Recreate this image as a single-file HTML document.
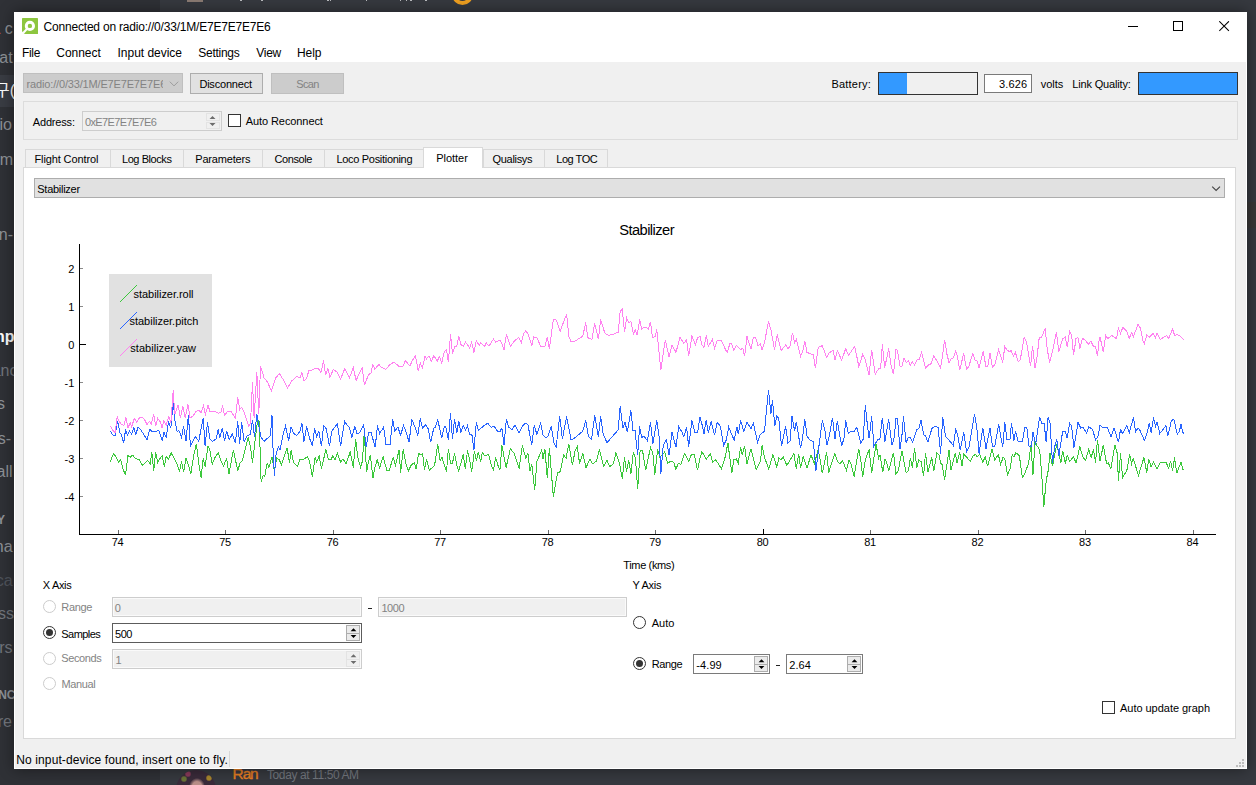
<!DOCTYPE html>
<html lang="en"><head><meta charset="utf-8"><title>Connected on radio://0/33/1M/E7E7E7E7E6</title>
<style>
html,body{margin:0;padding:0}
body{width:1256px;height:785px;overflow:hidden;position:relative;background:#36393f;font-family:"Liberation Sans", sans-serif;}
#desk,#win{position:absolute;left:0;top:0;width:1256px;height:785px;overflow:hidden}
#desk>div,#win>div,#win>svg,.clip>div{position:absolute}
#win div div{position:absolute}
.t{line-height:1;white-space:nowrap;font-family:"Liberation Sans", sans-serif}
.clip{overflow:hidden}
.sd{right:1242px;font:16px/20px "Liberation Sans", sans-serif;white-space:nowrap}
.dz{line-height:1;white-space:nowrap}
.radio{width:13px;height:13px;box-sizing:border-box;border:1px solid #333;border-radius:50%;background:#fff}
.radio i{position:absolute;left:2px;top:2px;width:7px;height:7px;border-radius:50%;background:#333}
</style></head>
<body>
<div id="desk">
<div style="left:0px;top:0px;width:160px;height:785px;background:#2f3136"></div>
<div style="left:160px;top:0px;width:1096px;height:785px;background:#36393f"></div>
<div style="left:0px;top:75px;width:14px;height:32px;background:#393c43"></div>
<div style="left:1247px;top:202px;width:9px;height:26px;background:#393838"></div>
<div class="sd" style="top:19px;right:1243.2px;color:#8e9297;font-weight:400"><span style="color:#b5524f">L</span> c</div>
<div class="sd" style="top:48px;right:1243.4px;color:#8e9297;font-weight:400">at</div>
<div class="sd" style="top:115px;right:1244px;color:#8e9297;font-weight:400">io</div>
<div class="sd" style="top:150px;right:1243px;color:#8e9297;font-weight:400">-m</div>
<div class="sd" style="top:225px;right:1243px;color:#8e9297;font-weight:400">n-</div>
<div class="sd" style="top:327px;right:1241.5px;color:#ffffff;font-weight:700">np</div>
<div class="sd" style="top:361px;right:1238.5px;color:#72767d;font-weight:400">anc</div>
<div class="sd" style="top:394px;right:1251px;color:#8e9297;font-weight:400">s</div>
<div class="sd" style="top:429px;right:1245px;color:#8e9297;font-weight:400">s-</div>
<div class="sd" style="top:462px;right:1243.4px;color:#8e9297;font-weight:400">all</div>
<div class="sd" style="top:537px;right:1243.4px;color:#8e9297;font-weight:400">na</div>
<div class="sd" style="top:571px;right:1243.4px;color:#4f545c;font-weight:400">ca</div>
<div class="sd" style="top:604px;right:1242px;color:#72767d;font-weight:400">ss</div>
<div class="sd" style="top:638px;right:1243.4px;color:#72767d;font-weight:400">rs</div>
<div class="sd" style="top:712px;right:1244px;color:#72767d;font-weight:400">re</div>
<div class="sd" style="top:510px;right:1251px;color:#8e9297;font-size:12px;font-weight:700">Y</div>
<div class="sd" style="top:685px;right:1240.5px;color:#8e9297;font-size:12px;font-weight:700">INC</div>
<div class="sd" style="top:81px;right:1241px;color:#fff;font:16px/20px 'Liberation Sans','Noto Sans CJK KR',sans-serif">&#xAD6C;(</div>
<div class="t " style="top:766.18px;font-size:15.5px;color:#e67e22;letter-spacing:-1.146px;left:232.60px;-webkit-text-stroke:0.35px #e67e22;"><span>Ran</span></div>
<div class="t " style="top:769.14px;font-size:12px;color:#72767d;letter-spacing:-0.401px;left:267.00px;"><span>Today at 11:50 AM</span></div>
<div style="left:176px;top:769.5px;width:40px;height:40px;border-radius:50%;background:radial-gradient(ellipse 8px 9px at 21px 17px,#b98f88 0 60%,transparent 100%),radial-gradient(circle at 8px 9px,#6a7436 0 2px,transparent 3.5px),radial-gradient(circle at 33px 8px,#a8862c 0 2px,transparent 3.5px),radial-gradient(circle at 12px 4px,#8a3a5a 0 2px,transparent 3.5px),#3a2b3a"></div>
<div style="left:451.5px;top:-16px;width:21px;height:21px;border-radius:50%;border:4px solid #f0a020;box-sizing:border-box"></div>
<div style="left:187px;top:0px;width:16px;height:2px;background:#8a7a72"></div>
<div style="left:240px;top:0px;width:1.5px;height:1.4px;background:#b9bbbe"></div>
<div style="left:261px;top:0px;width:1.5px;height:1.4px;background:#b9bbbe"></div>
<div style="left:327px;top:0px;width:1.5px;height:1.4px;background:#b9bbbe"></div>
<div style="left:329.5px;top:0px;width:1.5px;height:1.4px;background:#b9bbbe"></div>
<div style="left:365.5px;top:0px;width:1.5px;height:1.4px;background:#b9bbbe"></div>
<div style="left:399.5px;top:0px;width:1.5px;height:1.4px;background:#b9bbbe"></div>
<div style="left:405.5px;top:0px;width:1.5px;height:1.4px;background:#b9bbbe"></div>
<div style="left:410px;top:0px;width:1.5px;height:1.4px;background:#b9bbbe"></div>
<div style="left:425px;top:0px;width:1.5px;height:1.4px;background:#b9bbbe"></div>
</div>
<div id="win">
<div style="left:14px;top:12px;width:1233px;height:757px;background:#fff;box-shadow:0 0 14px rgba(0,0,0,.45)"></div>
<div style="left:15px;top:62px;width:1231px;height:706px;background:#f0f0f0"></div>
<svg style="left:22px;top:18px" width="16" height="16" viewBox="0 0 16 16"><rect width="16" height="16" rx=".6" fill="#8dc63f"/><path d="M1.2 15 L5.2 10.6" stroke="#fff" stroke-width="2.1" stroke-linecap="butt" fill="none"/><circle cx="7.9" cy="7.9" r="3.65" fill="none" stroke="#fff" stroke-width="2.9"/><path d="M0 13.2 L0 16 L2.6 16 Z" fill="#fff"/></svg>
<div class="t " style="top:21.24px;font-size:12px;color:#000;letter-spacing:-0.201px;left:43.60px;"><span>Connected on radio://0/33/1M/E7E7E7E7E6</span></div>
<div style="left:1128px;top:26px;width:10px;height:1px;background:#000"></div>
<div style="left:1173px;top:21px;width:10px;height:10px;border:1px solid #000;box-sizing:border-box"></div>
<svg style="left:1219px;top:21px" width="11" height="11" viewBox="0 0 11 11"><path d="M0.3 0.3 L9.9 9.9 M9.9 0.3 L0.3 9.9" stroke="#000" stroke-width="1.05" fill="none"/></svg>
<div class="t " style="top:46.84px;font-size:12px;color:#000;letter-spacing:-0.336px;left:22.00px;"><span>File</span></div>
<div class="t " style="top:46.84px;font-size:12px;color:#000;letter-spacing:-0.029px;left:56.30px;"><span>Connect</span></div>
<div class="t " style="top:46.84px;font-size:12px;color:#000;letter-spacing:-0.018px;left:117.50px;"><span>Input device</span></div>
<div class="t " style="top:46.84px;font-size:12px;color:#000;letter-spacing:-0.270px;left:198.30px;"><span>Settings</span></div>
<div class="t " style="top:46.84px;font-size:12px;color:#000;letter-spacing:-0.274px;left:256.30px;"><span>View</span></div>
<div class="t " style="top:46.84px;font-size:12px;color:#000;letter-spacing:-0.047px;left:297.00px;"><span>Help</span></div>
<div style="left:23px;top:73px;width:160px;height:20px;background:#ccc;border:1px solid #bfbfbf;box-sizing:border-box"></div>
<div class="clip" style="left:25px;top:74px;width:138px;height:18px">
<div class="t " style="top:5.29px;font-size:11px;color:#838383;letter-spacing:-0.162px;left:1.60px;"><span>radio://0/33/1M/E7E7E7E7E6</span></div>
</div>
<svg style="left:169px;top:81px" width="10" height="6" viewBox="0 0 10 6"><path d="M0.8 0.7 L5 4.9 L9.2 0.7" stroke="#9b9b9b" stroke-width="1" fill="none"/></svg>
<div style="left:190px;top:73px;width:73px;height:21px;background:#e1e1e1;border:1px solid #adadad;box-sizing:border-box"></div>
<div class="t " style="top:78.69px;font-size:11px;color:#000;letter-spacing:-0.202px;left:199.40px;"><span>Disconnect</span></div>
<div style="left:271px;top:73px;width:73px;height:21px;background:#ccc;border:1px solid #bfbfbf;box-sizing:border-box"></div>
<div class="t " style="top:78.69px;font-size:11px;color:#838383;letter-spacing:-0.695px;left:157.50px;width:300px;text-align:center;"><span>Scan</span></div>
<div class="t " style="top:78.69px;font-size:11px;color:#000;letter-spacing:0.199px;left:831.50px;"><span>Battery:</span></div>
<div style="left:878px;top:72px;width:100px;height:23px;background:#f0f0f0;border:1px solid #333;box-sizing:border-box"><div style="left:0px;top:0px;width:28px;height:21px;background:#3399ff"></div></div>
<div style="left:984px;top:74px;width:48px;height:19px;background:#fff;border:1px solid #7a7a7a;box-sizing:border-box"></div>
<div class="t " style="top:78.69px;font-size:11px;color:#000;letter-spacing:0.174px;left:727.40px;width:300px;text-align:right;"><span>3.626</span></div>
<div class="t " style="top:78.69px;font-size:11px;color:#000;letter-spacing:-0.005px;left:1040.70px;"><span>volts</span></div>
<div class="t " style="top:78.69px;font-size:11px;color:#000;letter-spacing:-0.164px;left:1072.30px;"><span>Link Quality:</span></div>
<div style="left:1138px;top:72px;width:100px;height:23px;background:#3399ff;border:1px solid #333;box-sizing:border-box"></div>
<div style="left:23px;top:101px;width:1215px;height:39px;border:1px solid #dcdcdc;box-sizing:border-box"></div>
<div class="t " style="top:116.69px;font-size:11px;color:#000;letter-spacing:-0.178px;left:32.80px;"><span>Address:</span></div>
<div style="left:82px;top:111px;width:140px;height:20px;background:#f0f0f0;border:1px solid #cdcdcd;box-sizing:border-box"></div>
<div class="t " style="top:116.69px;font-size:11px;color:#838383;letter-spacing:-0.624px;left:84.90px;"><span>0xE7E7E7E7E6</span></div>
<div style="left:206px;top:113px;width:14px;height:8px;border:1px solid #e3e3e3;box-sizing:border-box"></div>
<div style="left:206px;top:122px;width:14px;height:7px;border:1px solid #e3e3e3;box-sizing:border-box"></div>
<svg style="left:209px;top:116px" width="7" height="10" viewBox="0 0 7 10"><path d="M0.5 3 L3.5 0 L6.5 3 Z M0.5 7 L3.5 10 L6.5 7 Z" fill="#6d6d6d"/></svg>
<div style="left:228px;top:114px;width:13px;height:13px;background:#fff;border:1px solid #333;box-sizing:border-box"></div>
<div class="t " style="top:115.69px;font-size:11px;color:#000;letter-spacing:-0.092px;left:245.80px;"><span>Auto Reconnect</span></div>
<div style="left:23px;top:167px;width:1213px;height:572px;background:#fff;border:1px solid #d9d9d9;box-sizing:border-box"></div>
<div style="left:25px;top:149px;width:86px;height:19px;background:#f0f0f0;border:1px solid #d9d9d9;box-sizing:border-box"></div>
<div class="t " style="top:153.69px;font-size:11px;color:#000;letter-spacing:-0.119px;left:34.50px;"><span>Flight Control</span></div>
<div style="left:110px;top:149px;width:74px;height:19px;background:#f0f0f0;border:1px solid #d9d9d9;box-sizing:border-box"></div>
<div class="t " style="top:153.69px;font-size:11px;color:#000;letter-spacing:-0.431px;left:122.00px;"><span>Log Blocks</span></div>
<div style="left:183px;top:149px;width:80px;height:19px;background:#f0f0f0;border:1px solid #d9d9d9;box-sizing:border-box"></div>
<div class="t " style="top:153.69px;font-size:11px;color:#000;letter-spacing:-0.186px;left:195.25px;"><span>Parameters</span></div>
<div style="left:262px;top:149px;width:63px;height:19px;background:#f0f0f0;border:1px solid #d9d9d9;box-sizing:border-box"></div>
<div class="t " style="top:153.69px;font-size:11px;color:#000;letter-spacing:-0.408px;left:274.50px;"><span>Console</span></div>
<div style="left:324px;top:149px;width:100px;height:19px;background:#f0f0f0;border:1px solid #d9d9d9;box-sizing:border-box"></div>
<div class="t " style="top:153.69px;font-size:11px;color:#000;letter-spacing:-0.312px;left:336.50px;"><span>Loco Positioning</span></div>
<div style="left:483px;top:149px;width:62px;height:19px;background:#f0f0f0;border:1px solid #d9d9d9;box-sizing:border-box"></div>
<div class="t " style="top:153.69px;font-size:11px;color:#000;letter-spacing:-0.305px;left:492.50px;"><span>Qualisys</span></div>
<div style="left:544px;top:149px;width:64px;height:19px;background:#f0f0f0;border:1px solid #d9d9d9;box-sizing:border-box"></div>
<div class="t " style="top:153.69px;font-size:11px;color:#000;letter-spacing:-0.462px;left:556.25px;"><span>Log TOC</span></div>
<div style="left:423px;top:147px;width:60px;height:21px;background:#fff;border:1px solid #d9d9d9;border-bottom:none;box-sizing:border-box"></div>
<div class="t " style="top:152.89px;font-size:11px;color:#000;letter-spacing:-0.042px;left:436.25px;"><span>Plotter</span></div>
<div style="left:34px;top:178px;width:1191px;height:20px;background:#e1e1e1;border:1px solid #adadad;box-sizing:border-box"></div>
<div class="t " style="top:183.69px;font-size:11px;color:#000;letter-spacing:-0.275px;left:37.30px;"><span>Stabilizer</span></div>
<svg style="left:1211px;top:185px" width="11" height="7" viewBox="0 0 11 7"><path d="M1.2 1.6 L5.1 5.5 L9 1.6" stroke="#444" stroke-width="1.15" fill="none"/></svg>
<div class="t " style="top:222.56px;font-size:14.7px;color:#000;letter-spacing:-0.562px;left:496.60px;width:300px;text-align:center;"><span>Stabilizer</span></div>
<svg id="plot" style="left:0;top:200px" width="1256" height="360" viewBox="0 200 1256 360" shape-rendering="crispEdges"><rect x="109" y="274" width="103" height="93" fill="#e1e1e1"/><polyline points="110.4,461.5 113.5,453.6 115.9,456.4 118.3,462.0 120.7,459.6 123.1,469.2 125.5,475.2 127.9,455.6 130.3,457.2 132.6,455.2 135.8,458.8 139.0,459.6 142.2,465.2 145.4,462.8 147.8,460.4 150.2,463.6 151.8,452.5 153.7,470.8 155.7,451.7 157.6,462.8 159.7,458.8 162.1,455.6 164.5,466.8 166.1,456.4 168.5,458.8 171.2,452.9 174.0,458.0 177.2,464.4 179.6,471.1 181.5,461.2 183.6,472.4 186.0,458.0 188.4,465.2 190.8,473.9 193.9,454.8 196.3,443.7 198.7,462.8 201.1,477.9 203.2,458.0 205.1,466.8 208.0,445.6 209.9,450.1 212.3,464.4 214.6,458.0 218.2,452.9 221.0,461.2 223.4,466.0 226.6,458.8 229.0,473.9 233.4,449.7 237.7,470.8 240.1,462.8 242.5,460.4 248.1,437.3 250.5,446.9 252.5,462.8 255.3,438.9 257.6,419.8 259.2,421.4 261.1,481.9 263.2,475.5 264.8,476.3 267.2,462.8 268.8,467.6 272.0,457.2 274.4,470.8 276.8,458.0 279.1,459.6 281.5,464.4 287.1,447.7 289.5,462.8 291.1,450.1 293.5,462.8 297.5,466.0 300.0,459.6 303.2,459.8 307.2,456.7 309.6,461.4 312.4,476.6 315.1,457.5 316.7,462.2 319.1,455.9 321.5,468.6 325.8,449.5 328.3,459.0 331.1,459.8 332.6,455.9 335.0,459.8 337.4,453.5 340.6,462.2 343.0,459.0 346.2,463.8 350.2,451.9 353.3,467.8 355.7,439.1 357.6,456.7 360.5,467.0 362.4,461.4 364.2,432.8 366.6,471.8 368.5,461.4 370.4,455.1 372.9,478.2 374.8,467.8 377.2,459.8 379.6,467.8 383.1,456.7 386.8,470.2 389.2,470.2 393.2,457.5 395.5,465.4 399.0,450.3 400.6,472.6 403.2,449.5 405.9,463.8 408.3,471.0 411.5,464.6 414.3,463.0 416.2,469.4 418.6,453.5 421.0,455.1 422.6,453.5 424.5,470.2 426.6,459.0 429.3,470.2 434.6,465.4 437.7,443.9 440.1,460.6 442.0,457.5 446.5,471.8 448.4,448.7 450.5,463.0 452.5,463.0 454.5,453.5 456.8,465.4 458.8,471.0 463.2,454.3 465.3,469.4 467.5,450.3 469.6,459.8 471.7,471.8 474.4,451.1 476.4,461.4 478.3,451.9 480.7,462.2 482.3,452.7 484.7,455.9 488.7,454.3 491.1,464.6 493.5,470.2 495.5,457.5 498.2,466.2 500.0,469.4 501.9,445.5 506.1,467.5 510.4,448.7 514.3,453.5 519.1,468.6 522.3,445.5 525.8,458.2 527.9,452.7 529.9,471.0 531.8,464.6 534.7,489.8 536.9,461.4 541.7,450.3 543.0,459.0 544.9,448.7 547.3,478.2 549.4,447.9 553.3,496.5 557.6,472.6 560.2,471.8 563.7,455.1 566.1,458.2 568.8,443.6 572.5,465.4 574.8,451.9 577.2,446.3 579.6,463.8 582.8,453.5 586.0,467.8 590.0,459.0 592.4,463.8 596.3,461.4 599.5,449.5 603.5,466.2 607.0,460.6 609.9,466.5 613.4,463.8 615.9,452.7 619.4,463.0 622.3,478.6 624.5,457.5 626.6,471.8 628.7,459.8 630.9,474.2 633.4,451.9 635.4,458.2 637.7,488.5 640.1,451.1 642.5,450.3 645.7,470.2 650.5,447.4 652.9,453.5 654.8,474.5 657.6,449.5 660.0,457.5 664.8,451.9 667.5,463.0 671.2,461.1 673.6,462.2 676.0,469.4 678.3,463.0 680.7,464.6 684.7,453.5 688.7,461.4 691.1,455.1 694.3,454.3 697.5,470.2 700.0,458.2 701.9,451.9 706.4,459.0 710.4,453.8 712.7,462.2 715.9,459.8 721.5,469.1 725.5,455.9 727.9,442.6 731.8,473.4 733.8,459.5 736.3,459.0 738.2,463.3 740.6,447.4 742.2,455.1 744.6,446.3 747.0,463.8 751.0,448.7 756.1,469.4 760.5,461.4 762.1,445.5 764.5,457.5 768.8,469.1 772.9,454.7 776.8,467.0 778.8,458.2 781.2,459.8 783.1,456.7 786.8,465.4 793.9,453.8 796.3,468.6 798.7,454.3 800.6,467.8 803.2,456.7 807.0,467.8 811.1,455.1 814.3,463.8 818.2,449.5 820.2,459.8 822.3,473.4 826.6,451.9 828.7,472.6 832.2,461.4 835.0,453.5 837.3,461.4 840.1,463.8 842.5,460.6 846.5,470.2 848.9,460.6 850.5,462.2 854.1,476.6 858.8,448.7 860.8,460.6 862.7,476.6 865.3,459.8 869.1,449.5 871.7,472.9 876.0,444.2 878.7,458.2 879.9,454.7 882.8,472.3 885.0,459.0 886.6,462.2 888.7,470.7 893.5,452.7 895.9,474.2 898.2,471.0 900.0,461.4 901.9,450.6 906.1,472.6 908.3,471.0 910.4,458.2 912.4,467.8 914.6,447.9 916.7,467.8 918.8,460.2 921.0,461.4 923.6,475.8 925.5,452.7 927.9,472.3 931.8,457.5 933.8,471.0 936.9,452.7 939.0,455.1 940.6,463.0 942.2,464.6 944.6,479.7 949.0,450.3 951.0,470.2 955.4,452.7 957.0,463.0 959.7,451.9 962.1,466.2 963.7,454.3 966.9,457.5 970.4,461.4 973.2,455.9 975.6,454.3 977.2,456.7 979.6,454.3 982.8,462.2 985.2,456.7 987.6,466.2 992.0,449.5 994.7,459.8 998.4,454.7 1000.6,464.6 1003.2,457.0 1004.8,459.0 1007.5,474.5 1009.9,469.4 1012.3,454.7 1013.9,457.0 1015.9,452.7 1019.4,455.9 1022.3,477.4 1024.5,474.2 1028.7,463.0 1030.9,444.7 1033.0,474.5 1035.0,441.5 1037.3,446.3 1039.6,449.5 1041.7,474.2 1043.8,506.8 1046.2,480.5 1048.1,471.0 1050.0,453.5 1052.5,466.2 1056.8,443.9 1060.8,463.0 1062.7,450.6 1065.3,463.8 1067.2,455.1 1069.6,461.4 1073.6,456.7 1076.0,463.0 1079.9,446.8 1082.8,456.7 1085.5,460.6 1088.7,449.5 1091.1,457.5 1093.5,449.5 1095.5,462.7 1097.5,439.9 1100.0,461.4 1103.3,445.2 1106.6,463.8 1108.2,462.7 1110.9,468.6 1114.9,444.7 1117.3,453.5 1118.4,481.3 1120.5,453.5 1122.6,477.4 1126.9,470.2 1129.6,454.3 1131.6,463.8 1133.2,458.6 1138.5,475.4 1143.9,457.5 1146.8,472.6 1148.7,459.0 1151.1,467.0 1153.5,462.2 1157.1,468.6 1160.3,462.7 1165.9,462.2 1168.7,468.1 1170.6,461.1 1172.6,471.0 1174.6,457.5 1176.7,473.4 1181.0,462.2 1182.9,469.4 1183.9,469.1" fill="none" stroke="#3cc83c" stroke-width="1"/><polyline points="110.4,431.0 112.7,434.9 115.1,435.7 117.5,420.6 119.9,432.5 121.5,434.9 123.6,443.4 125.5,430.2 127.4,434.9 129.5,431.0 131.8,434.1 133.8,427.8 135.8,434.1 138.2,427.0 140.6,429.4 143.0,433.3 147.0,439.7 149.7,429.4 152.5,431.8 155.7,431.8 158.9,430.2 162.1,440.5 164.0,432.5 166.1,437.3 168.5,422.2 170.9,427.8 173.2,400.7 174.8,419.8 177.2,431.8 178.8,430.2 181.5,437.3 183.6,426.2 186.0,441.3 188.4,415.0 190.4,446.1 195.5,436.5 198.7,441.3 203.2,418.2 205.1,446.1 207.5,422.2 209.9,438.9 212.3,441.3 216.2,438.9 218.2,429.4 219.7,438.1 222.3,427.8 224.5,441.3 226.6,431.0 229.3,439.7 232.2,434.1 235.4,442.9 237.7,421.4 239.6,443.7 241.7,422.2 244.1,441.3 247.3,435.7 250.5,434.1 252.5,419.8 254.5,437.3 256.8,414.2 259.2,427.8 261.1,437.3 264.0,441.3 270.4,435.7 272.0,415.0 272.8,443.7 274.4,476.3 276.0,454.8 278.3,446.9 279.9,450.1 283.1,434.1 285.5,426.2 288.7,440.5 291.1,427.0 293.5,433.3 296.7,435.7 300.0,431.0 301.9,423.2 304.0,441.5 306.7,426.4 309.6,438.3 312.4,446.3 314.6,428.0 316.7,436.8 318.8,431.2 321.5,446.3 323.6,425.6 326.3,428.8 329.5,446.3 331.8,431.2 334.7,427.2 337.4,424.0 340.6,446.3 344.6,421.3 347.0,424.8 349.4,427.2 351.8,437.5 354.9,426.4 357.0,433.6 359.7,432.8 363.7,424.8 366.1,447.1 368.5,432.8 370.9,432.0 375.2,447.1 377.5,425.6 379.6,433.6 383.6,427.2 386.0,444.7 390.0,444.7 392.7,419.2 394.7,431.2 397.9,427.2 400.6,435.2 403.5,425.6 405.9,431.2 409.1,442.3 411.8,419.2 415.4,428.0 417.8,436.0 420.2,418.4 422.6,428.0 425.8,424.8 428.2,428.8 430.6,442.3 433.8,428.0 435.4,427.2 437.7,419.2 441.7,438.3 444.1,427.2 445.7,426.4 448.4,439.9 450.5,413.3 452.5,439.1 454.5,419.2 456.8,432.8 458.8,420.8 460.8,432.8 463.2,425.6 465.6,430.4 467.5,425.6 469.6,434.4 472.0,435.2 473.9,450.3 476.3,422.4 478.3,430.4 483.1,426.4 487.6,423.2 491.1,427.2 494.3,426.4 497.5,431.2 500.0,431.5 501.9,428.0 504.0,444.7 506.4,419.2 508.8,427.2 511.9,429.6 515.1,425.1 519.1,432.8 522.3,426.4 525.5,423.2 527.9,424.8 531.8,444.7 534.2,425.6 536.9,434.4 540.6,423.2 543.0,435.2 545.4,437.5 547.8,436.8 551.3,426.4 553.8,442.3 556.1,447.4 559.7,416.5 562.4,439.1 566.6,416.5 570.9,439.1 573.2,439.1 578.0,435.2 582.8,431.2 585.7,420.4 588.4,436.8 591.6,439.1 594.7,415.3 598.4,436.8 600.6,416.5 603.2,434.4 607.0,442.6 618.2,429.9 620.2,406.2 622.9,428.0 625.0,422.4 627.4,432.0 630.9,410.5 633.0,430.4 635.0,430.4 637.7,455.1 639.6,426.4 641.7,437.5 644.1,436.0 647.3,440.7 650.5,422.4 652.9,443.9 656.8,420.4 659.2,437.5 660.8,474.2 663.2,445.5 666.4,439.9 669.1,455.1 672.0,432.5 676.0,447.1 678.7,426.7 681.5,431.2 683.9,436.8 686.6,426.7 688.7,447.1 691.9,420.4 695.1,432.8 697.5,432.8 700.0,416.8 701.9,424.0 704.0,433.6 706.1,420.0 708.3,432.8 711.1,421.6 714.6,435.2 717.2,422.4 720.4,426.4 723.6,445.5 726.3,439.9 728.7,427.2 731.1,432.8 734.2,440.4 736.9,426.7 738.2,434.4 740.6,420.4 743.8,431.5 747.0,422.4 751.0,428.8 753.3,423.2 757.6,442.3 760.2,434.4 764.5,431.2 766.6,408.9 768.5,390.1 770.9,413.7 772.5,400.4 774.8,425.6 776.8,416.1 778.8,418.4 781.5,446.3 783.6,436.0 785.7,426.4 787.9,443.1 790.0,441.5 792.0,416.5 794.7,431.2 796.3,421.6 800.6,448.4 802.7,436.8 804.8,419.2 807.0,436.0 810.2,440.4 813.4,441.5 815.9,470.7 818.6,448.7 822.3,420.4 825.0,431.2 826.9,445.2 829.0,437.5 832.5,417.6 835.0,439.1 837.3,420.8 841.7,446.3 844.1,437.5 845.7,420.4 848.4,433.6 850.5,431.2 854.1,431.5 856.8,427.2 860.8,443.1 863.2,439.1 865.3,405.4 867.2,423.2 869.1,438.3 871.7,416.5 873.9,446.3 877.5,439.9 879.9,439.1 882.3,417.6 885.0,441.5 888.7,419.2 891.9,445.2 894.3,437.5 895.9,418.8 897.5,418.8 900.0,448.7 901.9,436.0 903.5,416.5 906.1,442.6 908.3,437.5 910.4,437.5 912.7,442.3 916.7,429.6 918.8,428.8 921.0,420.4 923.6,434.7 925.5,436.0 927.9,442.0 931.8,428.8 934.7,426.1 938.2,427.7 940.6,453.5 942.7,417.2 945.4,436.0 949.4,440.7 953.3,445.5 955.7,429.6 957.6,434.4 960.2,450.3 963.7,432.0 966.6,451.9 968.8,447.9 974.5,414.0 976.8,427.2 979.1,453.8 982.8,427.7 986.0,448.7 990.0,427.7 992.4,446.3 994.7,446.3 998.7,424.5 1002.7,447.4 1004.8,422.4 1007.0,439.9 1009.9,439.9 1011.5,423.2 1013.9,440.7 1015.4,431.2 1018.2,442.0 1022.3,441.5 1025.0,427.2 1026.9,428.0 1029.0,446.3 1031.4,446.3 1033.0,432.5 1035.7,444.7 1039.6,417.2 1041.7,423.2 1044.1,423.2 1046.2,442.3 1048.1,417.2 1050.0,423.2 1052.5,463.0 1054.8,446.3 1056.8,439.1 1058.8,455.9 1062.7,431.2 1065.3,431.2 1067.2,438.3 1069.6,423.2 1071.7,426.4 1073.9,447.9 1078.0,422.4 1080.7,428.0 1083.1,427.7 1086.6,432.8 1088.7,426.7 1092.7,429.6 1095.5,439.9 1098.2,436.0 1100.0,424.8 1103.0,428.0 1107.3,427.2 1110.9,436.8 1114.1,428.0 1118.4,442.3 1120.5,429.6 1122.6,433.6 1126.9,425.6 1129.2,432.8 1133.5,417.6 1135.6,432.0 1138.0,427.7 1140.4,431.2 1144.4,440.4 1146.8,434.4 1149.2,423.2 1151.1,432.8 1153.5,417.6 1155.5,426.4 1157.1,422.4 1159.8,433.6 1165.9,425.6 1167.8,436.0 1171.4,420.8 1173.8,419.2 1177.3,434.0 1179.4,431.2 1181.0,424.0 1182.9,432.8 1183.9,433.1" fill="none" stroke="#2864ff" stroke-width="1"/><polyline points="110.4,426.2 112.7,430.2 115.1,432.5 117.2,416.6 119.1,421.4 121.5,424.6 123.9,425.4 125.8,417.4 127.9,427.8 130.3,423.0 131.8,427.0 134.2,418.2 136.6,422.2 139.8,417.4 142.2,417.4 144.6,419.8 147.0,424.6 149.4,421.4 151.3,423.8 153.7,414.2 155.7,426.2 157.6,418.2 160.5,422.2 162.1,427.8 164.0,420.6 166.1,425.4 168.8,416.6 170.9,423.0 173.2,390.4 174.8,414.2 178.0,404.7 180.4,418.2 182.8,406.3 185.2,418.2 187.9,403.9 190.0,418.2 193.2,415.8 195.5,411.8 198.7,410.3 201.1,412.6 203.5,405.5 205.4,414.2 208.0,405.5 209.9,411.1 214.6,411.1 218.6,413.4 221.0,411.8 222.6,405.5 224.5,415.0 227.4,411.8 231.4,411.8 235.4,418.2 237.7,397.5 239.8,409.5 241.7,407.1 244.1,411.8 246.5,419.8 248.9,426.2 250.5,423.0 252.5,382.4 254.1,418.2 256.8,372.0 258.8,414.2 260.5,366.0 264.1,377.9 267.6,382.3 271.4,391.1 275.8,377.9 279.3,373.5 283.1,379.4 287.5,388.2 291.9,380.8 296.9,376.4 300.0,378.0 301.9,372.5 304.0,381.2 306.4,378.8 308.8,370.9 311.9,370.1 315.1,368.5 318.3,368.5 321.0,372.5 323.6,360.5 325.5,374.8 327.9,368.5 329.9,377.2 333.4,369.3 337.4,372.5 340.6,378.8 344.9,368.5 349.4,378.0 353.3,367.7 356.1,380.4 362.1,367.7 364.5,385.2 368.5,374.5 370.9,373.2 372.9,364.5 374.8,369.3 378.8,364.5 382.0,367.7 386.0,369.3 390.0,364.5 393.9,362.1 398.7,366.1 402.7,366.9 405.4,360.5 409.9,366.1 412.3,360.5 415.4,355.7 418.2,370.9 420.2,362.9 422.3,367.7 425.0,356.5 426.6,358.9 429.0,355.7 431.4,361.3 433.8,355.7 437.3,361.3 439.3,356.5 441.7,362.9 444.1,352.5 446.5,349.4 448.4,362.1 450.5,334.2 452.5,354.1 454.5,347.0 456.8,346.2 458.8,336.6 460.8,344.6 463.2,346.2 465.6,342.2 469.6,347.8 471.7,342.2 473.9,352.5 476.3,340.6 479.1,345.4 480.7,343.0 484.7,346.2 486.3,343.0 489.0,346.2 493.5,339.0 495.9,342.2 500.0,340.1 501.9,343.3 504.0,349.7 506.4,334.6 510.4,346.5 515.1,340.2 518.8,337.5 521.5,342.5 523.6,333.8 525.8,330.6 528.3,334.6 531.8,345.4 533.8,337.0 536.9,337.8 540.6,346.1 544.9,346.1 547.3,337.5 549.4,348.6 553.3,319.5 556.1,319.9 560.2,331.1 563.7,321.8 566.6,314.2 568.8,336.2 570.9,341.3 574.8,341.3 578.8,338.6 582.8,336.2 585.7,322.6 587.9,337.8 592.0,339.4 594.7,323.4 598.4,339.4 600.6,319.5 604.8,333.0 608.3,335.4 614.6,333.8 618.2,332.2 620.2,311.5 622.3,309.4 624.5,332.2 626.6,317.9 628.7,322.6 630.9,321.8 633.4,333.8 635.4,329.8 637.3,335.4 639.6,319.5 641.7,329.0 644.9,326.9 648.4,329.0 650.5,321.8 652.5,337.8 655.3,336.2 656.8,329.5 660.8,370.4 665.3,339.7 669.1,357.2 672.0,344.9 676.0,352.4 679.9,337.5 683.9,343.3 686.6,339.4 688.7,356.1 691.9,336.2 695.5,344.9 697.5,337.8 700.0,336.2 701.9,344.9 704.0,347.3 706.4,335.4 708.3,346.5 712.4,339.4 714.6,348.1 717.2,340.6 721.5,340.6 725.5,349.7 727.4,352.4 729.9,343.3 731.8,344.1 733.8,350.5 736.3,345.4 740.6,349.7 742.7,348.1 744.6,356.1 747.0,336.5 751.0,349.2 753.3,337.8 755.4,337.5 758.1,345.7 760.2,343.8 762.1,349.7 764.5,342.5 768.5,321.5 770.9,329.8 774.5,349.7 777.2,334.6 781.2,350.5 785.7,344.9 787.9,348.6 790.0,346.5 792.4,332.7 794.7,342.5 796.3,339.7 800.6,356.1 802.7,351.3 804.8,340.6 807.0,352.4 811.1,354.0 813.4,354.5 815.4,368.3 818.2,347.3 822.3,345.7 826.6,357.2 829.0,352.9 833.0,350.5 835.0,360.1 837.3,350.5 841.7,360.1 845.7,348.6 848.4,355.3 854.8,346.5 858.8,366.4 862.7,354.5 865.3,359.7 869.1,375.2 871.7,349.7 875.2,374.1 878.7,368.8 880.7,368.0 882.3,344.5 884.7,367.7 888.7,348.6 891.1,365.6 893.5,374.4 895.9,349.7 897.5,350.2 900.0,366.4 901.9,366.1 904.0,357.7 906.1,362.5 908.3,360.9 910.4,365.2 912.4,362.0 914.6,365.2 916.7,360.1 919.1,359.7 921.5,352.4 923.6,360.1 925.5,368.3 928.3,365.2 931.1,363.6 933.8,356.1 936.9,360.9 940.6,367.7 942.7,354.5 944.6,339.7 947.0,354.5 949.0,362.5 951.3,358.8 953.3,357.7 955.7,351.3 957.6,356.9 959.7,370.4 963.7,353.4 966.6,369.3 968.8,366.4 972.9,353.4 974.8,360.1 977.2,361.3 979.1,368.3 983.1,351.3 986.0,366.8 987.9,366.1 990.0,353.4 992.4,367.7 994.7,364.8 998.7,349.7 1002.7,362.5 1004.8,346.5 1007.0,350.2 1009.9,351.8 1011.1,350.5 1013.4,356.1 1015.4,352.4 1018.2,361.7 1020.2,360.1 1024.2,337.5 1026.6,342.5 1030.6,366.4 1032.5,345.7 1035.0,368.3 1036.9,358.5 1039.3,337.0 1041.7,337.0 1045.2,328.5 1047.3,349.7 1049.7,362.5 1052.5,351.3 1056.4,331.7 1058.8,352.1 1062.7,338.6 1065.3,337.0 1067.2,347.3 1069.6,330.6 1071.7,336.2 1073.6,355.3 1076.0,338.6 1078.0,337.5 1079.9,348.6 1082.3,338.6 1084.7,339.4 1088.7,344.5 1090.8,341.0 1093.5,346.5 1095.5,346.1 1097.5,356.1 1099.4,337.5 1100.0,337.0 1103.3,351.8 1105.7,335.4 1107.8,338.6 1111.7,335.4 1116.5,338.6 1118.4,328.2 1120.5,333.3 1122.9,327.4 1126.9,331.4 1129.2,338.6 1131.6,332.7 1133.5,336.5 1138.0,324.2 1140.4,328.2 1142.8,340.2 1144.4,343.8 1146.8,334.6 1149.2,337.5 1153.1,333.3 1155.5,337.5 1157.1,333.3 1160.3,339.4 1164.3,337.0 1166.7,335.4 1168.7,338.6 1172.6,329.0 1174.6,335.4 1177.3,334.6 1180.2,336.2 1183.9,339.7" fill="none" stroke="#ff82f0" stroke-width="1"/><rect x="79" y="244" width="1" height="291" fill="#000"/><rect x="79" y="534" width="1137" height="1" fill="#000"/><rect x="80" y="268" width="3" height="1" fill="#8a8a8a"/><rect x="80" y="306" width="3" height="1" fill="#8a8a8a"/><rect x="80" y="382" width="3" height="1" fill="#8a8a8a"/><rect x="80" y="420" width="3" height="1" fill="#8a8a8a"/><rect x="80" y="458" width="3" height="1" fill="#8a8a8a"/><rect x="80" y="496" width="3" height="1" fill="#8a8a8a"/><rect x="80" y="344" width="6" height="1" fill="#000"/><rect x="118" y="530" width="1" height="4" fill="#6a6a6a"/><rect x="225" y="530" width="1" height="4" fill="#6a6a6a"/><rect x="333" y="530" width="1" height="4" fill="#6a6a6a"/><rect x="440" y="530" width="1" height="4" fill="#6a6a6a"/><rect x="548" y="530" width="1" height="4" fill="#6a6a6a"/><rect x="655" y="530" width="1" height="4" fill="#6a6a6a"/><rect x="763" y="529" width="1" height="5" fill="#000"/><rect x="870" y="530" width="1" height="4" fill="#6a6a6a"/><rect x="978" y="530" width="1" height="4" fill="#6a6a6a"/><rect x="1085" y="530" width="1" height="4" fill="#6a6a6a"/><rect x="1193" y="530" width="1" height="4" fill="#6a6a6a"/><line x1="120" y1="302" x2="137" y2="285" stroke="#3cc83c" stroke-width="1" shape-rendering="auto"/><line x1="120" y1="329" x2="137" y2="312" stroke="#2864ff" stroke-width="1" shape-rendering="auto"/><line x1="120" y1="356" x2="137" y2="339" stroke="#ff82f0" stroke-width="1" shape-rendering="auto"/></svg>
<div class="t " style="top:263.53px;font-size:11px;color:#000;left:-225.70px;width:300px;text-align:right;"><span>2</span></div>
<div class="t " style="top:301.61px;font-size:11px;color:#000;left:-225.70px;width:300px;text-align:right;"><span>1</span></div>
<div class="t " style="top:339.69px;font-size:11px;color:#000;left:-225.70px;width:300px;text-align:right;"><span>0</span></div>
<div class="t " style="top:377.77px;font-size:11px;color:#000;left:-225.70px;width:300px;text-align:right;"><span>-1</span></div>
<div class="t " style="top:415.85px;font-size:11px;color:#000;left:-225.70px;width:300px;text-align:right;"><span>-2</span></div>
<div class="t " style="top:453.93px;font-size:11px;color:#000;left:-225.70px;width:300px;text-align:right;"><span>-3</span></div>
<div class="t " style="top:492.01px;font-size:11px;color:#000;left:-225.70px;width:300px;text-align:right;"><span>-4</span></div>
<div class="t " style="top:536.69px;font-size:11px;color:#000;letter-spacing:-0.325px;left:-32.50px;width:300px;text-align:center;"><span>74</span></div>
<div class="t " style="top:536.69px;font-size:11px;color:#000;letter-spacing:-0.325px;left:74.99px;width:300px;text-align:center;"><span>75</span></div>
<div class="t " style="top:536.69px;font-size:11px;color:#000;letter-spacing:-0.325px;left:182.48px;width:300px;text-align:center;"><span>76</span></div>
<div class="t " style="top:536.69px;font-size:11px;color:#000;letter-spacing:-0.325px;left:289.97px;width:300px;text-align:center;"><span>77</span></div>
<div class="t " style="top:536.69px;font-size:11px;color:#000;letter-spacing:-0.325px;left:397.46px;width:300px;text-align:center;"><span>78</span></div>
<div class="t " style="top:536.69px;font-size:11px;color:#000;letter-spacing:-0.325px;left:504.95px;width:300px;text-align:center;"><span>79</span></div>
<div class="t " style="top:536.69px;font-size:11px;color:#000;letter-spacing:-0.325px;left:612.44px;width:300px;text-align:center;"><span>80</span></div>
<div class="t " style="top:536.69px;font-size:11px;color:#000;letter-spacing:-0.325px;left:719.93px;width:300px;text-align:center;"><span>81</span></div>
<div class="t " style="top:536.69px;font-size:11px;color:#000;letter-spacing:-0.325px;left:827.42px;width:300px;text-align:center;"><span>82</span></div>
<div class="t " style="top:536.69px;font-size:11px;color:#000;letter-spacing:-0.325px;left:934.91px;width:300px;text-align:center;"><span>83</span></div>
<div class="t " style="top:536.69px;font-size:11px;color:#000;letter-spacing:-0.325px;left:1042.40px;width:300px;text-align:center;"><span>84</span></div>
<div class="t " style="top:288.69px;font-size:11px;color:#000;letter-spacing:-0.035px;left:133.50px;"><span>stabilizer.roll</span></div>
<div class="t " style="top:315.69px;font-size:11px;color:#000;letter-spacing:-0.018px;left:129.50px;"><span>stabilizer.pitch</span></div>
<div class="t " style="top:342.69px;font-size:11px;color:#000;letter-spacing:0.027px;left:130.30px;"><span>stabilizer.yaw</span></div>
<div class="t " style="top:559.69px;font-size:11px;color:#000;letter-spacing:-0.359px;left:623.30px;"><span>Time (kms)</span></div>
<div class="t " style="top:579.69px;font-size:11px;color:#000;letter-spacing:-0.346px;left:42.80px;"><span>X Axis</span></div>
<div class="radio" style="left:43px;top:600px;border-color:#ccc"></div>
<div class="t " style="top:601.89px;font-size:11px;color:#838383;letter-spacing:-0.324px;left:61.30px;"><span>Range</span></div>
<div class="radio" style="left:43px;top:626px;border-color:#333"><i></i></div>
<div class="t " style="top:628.69px;font-size:11px;color:#000;letter-spacing:-0.557px;left:61.30px;"><span>Samples</span></div>
<div class="radio" style="left:43px;top:652px;border-color:#ccc"></div>
<div class="t " style="top:653.49px;font-size:11px;color:#838383;letter-spacing:-0.402px;left:61.30px;"><span>Seconds</span></div>
<div class="radio" style="left:43px;top:677px;border-color:#ccc"></div>
<div class="t " style="top:678.99px;font-size:11px;color:#838383;letter-spacing:-0.388px;left:61.50px;"><span>Manual</span></div>
<div style="left:112px;top:597px;width:250px;height:20px;background:#f0f0f0;border:1px solid #cdcdcd;box-shadow:inset 0 0 0 1px #fafafa;box-sizing:border-box"></div>
<div class="t " style="top:602.89px;font-size:11px;color:#838383;left:114.80px;"><span>0</span></div>
<div style="left:367.8px;top:608px;width:4px;height:1px;background:#222"></div>
<div style="left:378px;top:597px;width:249px;height:20px;background:#f0f0f0;border:1px solid #cdcdcd;box-shadow:inset 0 0 0 1px #fafafa;box-sizing:border-box"></div>
<div class="t " style="top:602.89px;font-size:11px;color:#838383;letter-spacing:-0.446px;left:381.40px;"><span>1000</span></div>
<div style="left:112px;top:623px;width:250px;height:20px;background:#fff;border:1px solid #5c5c5c;box-sizing:border-box"></div>
<div class="t " style="top:628.69px;font-size:11px;color:#000;letter-spacing:-0.486px;left:115.10px;"><span>500</span></div>
<div style="left:346px;top:625px;width:14px;height:16px;background:#ebebeb;border:1px solid #adadad;box-sizing:border-box"></div>
<div style="left:346px;top:633px;width:14px;height:1px;background:#adadad"></div>
<svg style="left:349.5px;top:628px" width="7" height="10" viewBox="0 0 7 10"><path d="M0.6 3.2 L3.5 0.2 L6.4 3.2 Z M0.6 6.9 L3.5 9.9 L6.4 6.9 Z" fill="#000"/></svg>
<div style="left:112px;top:649px;width:250px;height:20px;background:#f0f0f0;border:1px solid #cdcdcd;box-shadow:inset 0 0 0 1px #fafafa;box-sizing:border-box"></div>
<div class="t " style="top:654.69px;font-size:11px;color:#838383;left:115.50px;"><span>1</span></div>
<div style="left:346px;top:651px;width:14px;height:16px;border:1px solid #e3e3e3;box-sizing:border-box"></div>
<div style="left:346px;top:659px;width:14px;height:1px;background:#e3e3e3"></div>
<svg style="left:349.5px;top:654px" width="7" height="10" viewBox="0 0 7 10"><path d="M0.6 3.2 L3.5 0.2 L6.4 3.2 Z M0.6 6.9 L3.5 9.9 L6.4 6.9 Z" fill="#6d6d6d"/></svg>
<div class="t " style="top:579.69px;font-size:11px;color:#000;letter-spacing:-0.271px;left:632.50px;"><span>Y Axis</span></div>
<div class="radio" style="left:633px;top:616px;border-color:#333"></div>
<div class="t " style="top:617.99px;font-size:11px;color:#000;letter-spacing:-0.035px;left:651.75px;"><span>Auto</span></div>
<div class="radio" style="left:633px;top:657px;border-color:#333"><i></i></div>
<div class="t " style="top:658.99px;font-size:11px;color:#000;letter-spacing:-0.384px;left:651.75px;"><span>Range</span></div>
<div style="left:693px;top:654px;width:77px;height:20px;background:#fff;border:1px solid #7a7a7a;box-sizing:border-box"></div>
<div class="t " style="top:660.09px;font-size:11px;color:#000;letter-spacing:0.084px;left:696.30px;"><span>-4.99</span></div>
<div style="left:754px;top:656px;width:14px;height:16px;background:#ebebeb;border:1px solid #adadad;box-sizing:border-box"></div>
<div style="left:754px;top:664px;width:14px;height:1px;background:#adadad"></div>
<svg style="left:757.5px;top:659px" width="7" height="10" viewBox="0 0 7 10"><path d="M0.6 3.2 L3.5 0.2 L6.4 3.2 Z M0.6 6.9 L3.5 9.9 L6.4 6.9 Z" fill="#000"/></svg>
<div style="left:776px;top:665px;width:4px;height:1px;background:#222"></div>
<div style="left:786px;top:654px;width:77px;height:20px;background:#fff;border:1px solid #7a7a7a;box-sizing:border-box"></div>
<div class="t " style="top:660.09px;font-size:11px;color:#000;letter-spacing:0.020px;left:789.30px;"><span>2.64</span></div>
<div style="left:847px;top:656px;width:14px;height:16px;background:#ebebeb;border:1px solid #adadad;box-sizing:border-box"></div>
<div style="left:847px;top:664px;width:14px;height:1px;background:#adadad"></div>
<svg style="left:850.5px;top:659px" width="7" height="10" viewBox="0 0 7 10"><path d="M0.6 3.2 L3.5 0.2 L6.4 3.2 Z M0.6 6.9 L3.5 9.9 L6.4 6.9 Z" fill="#000"/></svg>
<div style="left:1102px;top:701px;width:13px;height:13px;background:#fff;border:1px solid #333;box-sizing:border-box"></div>
<div class="t " style="top:702.69px;font-size:11px;color:#000;letter-spacing:-0.031px;left:1120.00px;"><span>Auto update graph</span></div>
<div class="t " style="top:753.74px;font-size:12px;color:#000;letter-spacing:0.109px;left:16.30px;"><span>No input-device found, insert one to fly.</span></div>
<div style="left:229px;top:751px;width:1px;height:16px;background:#d7d7d7"></div>
<svg style="left:1236px;top:759px" width="9" height="9" viewBox="0 0 9 9" shape-rendering="crispEdges"><path d="M6 0h2v2h-2z M3 3h2v2h-2z M6 3h2v2h-2z M0 6h2v2h-2z M3 6h2v2h-2z M6 6h2v2h-2z" fill="#bdbdbd"/></svg>
</div>
</body></html>
